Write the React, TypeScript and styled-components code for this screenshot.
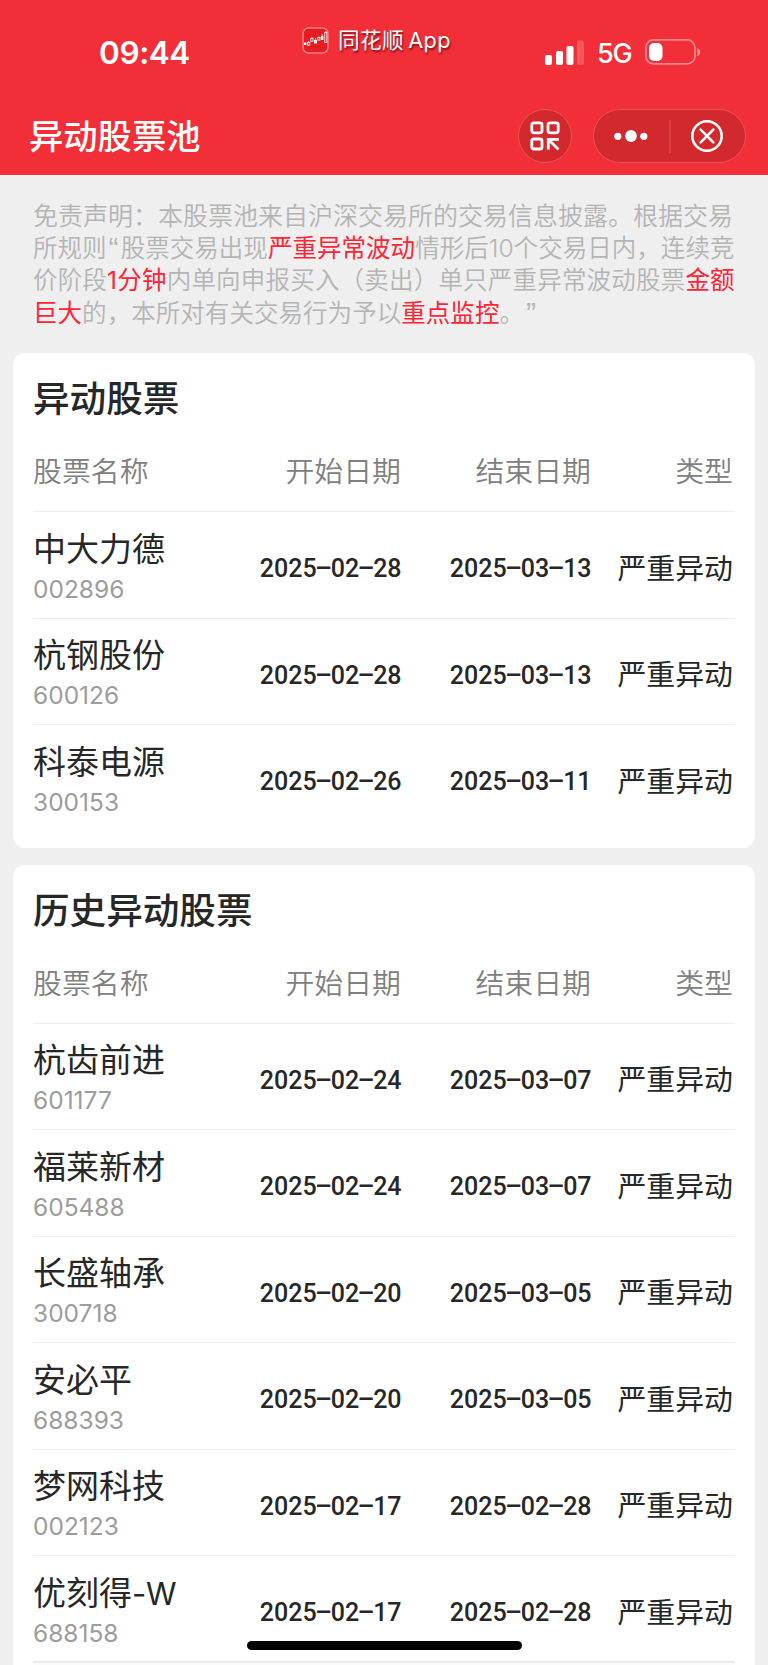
import React from "react";
import styled, { createGlobalStyle } from "styled-components";

const GlobalStyle = createGlobalStyle`
  *, *::before, *::after { box-sizing: border-box; }
  html, body { margin: 0; padding: 0; background: #efefef; }
  body {
    font-family: Inter, "Noto Sans CJK SC", sans-serif;
    color: #272727;
    overflow: hidden;
  }
`;

const Screen = styled.main`
  width: 768px;
  height: 1665px;
  overflow: hidden;
  display: flex;
  flex-direction: column;
  background: #efefef;
`;

const Header = styled.header`
  height: 175px;
  flex: none;
  background: #f22f38;
  color: #fff;
  display: flex;
  flex-direction: column;
`;

const StatusBar = styled.div`
  height: 97px;
  display: grid;
  grid-template-columns: 302px 243px 1fr;
`;

const Clock = styled.time`
  padding: 32px 0 0 99px;
  font-size: 31.5px;
  line-height: 42px;
  font-weight: 600;
  letter-spacing: -0.4px;
`;

const Brand = styled.div`
  height: 27px;
  margin-top: 27px;
  display: flex;
  align-items: center;
  gap: 9px;
`;

const BrandName = styled.span`
  font-size: 21.6px;
  line-height: 27px;
  white-space: nowrap;
  letter-spacing: 0.45px;
  text-shadow: 1px 2px 2px rgba(70, 0, 0, 0.65);
`;

const Latin = styled.span`
  margin-left: 4px;
`;

const Signals = styled.div`
  height: 26px;
  margin-top: 39px;
  display: flex;
  align-items: center;
`;

const Network = styled.span`
  width: 35px;
  margin: 3px 13px 0 13px;
  font-size: 27px;
  font-weight: 450;
  line-height: 26px;
  letter-spacing: -1.2px;
  white-space: nowrap;
`;

const NavBar = styled.div`
  height: 78px;
  padding: 0 22px 0 29px;
  display: flex;
  align-items: center;
`;

const PageTitle = styled.h1`
  margin: 0 auto 0 0;
  padding-top: 1px;
  font-size: 34.3px;
  line-height: 50px;
  font-weight: 500;
`;

const RoundButton = styled.button`
  width: 54px;
  height: 54px;
  margin: 0 21px 0 0;
  padding: 0;
  border: 1px solid #ea5359;
  border-radius: 50%;
  background: #d2292f;
  display: grid;
  place-items: center;
`;

const Capsule = styled.div`
  width: 153px;
  height: 54px;
  border: 1px solid #ea5359;
  border-radius: 27px;
  background: #d2292f;
  display: grid;
  grid-template-columns: 74.5px 2px 74.5px;
  align-items: center;
`;

const CapsuleButton = styled.button`
  padding: 0;
  border: 0;
  background: none;
  height: 52px;
  display: grid;
  place-items: center;
`;

const CapsuleRule = styled.span`
  width: 2px;
  height: 33px;
  background: #de3c43;
`;

const Disclaimer = styled.p`
  margin: 0;
  padding: 25px 0 0 33px;
  height: 178px;
  flex: none;
  color: #b4b4b4;
  font-weight: 350;
  line-height: 32.2px;
  text-spacing-trim: space-all;
`;

const Line = styled.span<{ $size: number; $track?: number }>`
  display: block;
  height: 32.2px;
  white-space: nowrap;
  font-size: ${(p) => p.$size}px;
  letter-spacing: ${(p) => p.$track ?? 0}px;
`;

const Quote = styled.span`
  display: inline-block;
  width: 14px;
  height: 32px;
  font-family: "Liberation Sans", sans-serif;
  font-size: 30px;
  line-height: 32px;
  vertical-align: top;
  text-align: center;
`;

const Alert = styled.em`
  font-style: normal;
  font-weight: 400;
  color: #ff2436;
`;

const Card = styled.section`
  flex: none;
  margin: 0 13px 16.9px;
  padding: 0 20px 16.3px;
  background: #fff;
  border-radius: 12px;
`;

const CardTitle = styled.h2`
  margin: 0;
  padding-top: 21px;
  height: 79px;
  font-size: 36.6px;
  line-height: 50px;
  font-weight: 500;
`;

const columns = `
  display: grid;
  grid-template-columns: 180px 188px 190px 142px;
  align-items: center;
`;

const HeadRow = styled.div`
  ${columns}
  height: 80px;
  color: #808080;
  font-size: 28.9px;
  font-weight: 350;
  line-height: 40px;
  border-bottom: 1px solid #ececec;
`;

const HeadCell = styled.span<{ $right?: boolean }>`
  margin-top: 1px;
  text-align: ${(p) => (p.$right ? "right" : "left")};
`;

const Row = styled.div`
  ${columns}
  height: 106.5px;
  border-bottom: 1px solid #ececec;
  &:last-child { border-bottom-color: transparent; }
`;

const Stock = styled.div`
  display: flex;
  flex-direction: column;
  padding-top: 4px;
`;

const StockName = styled.span`
  height: 44px;
  font-size: 33px;
  line-height: 44px;
  font-weight: 380;
  white-space: nowrap;
`;

const NameSuffix = styled.span`
  font-size: 31px;
  letter-spacing: -0.2px;
`;

const StockCode = styled.span`
  font-size: 24.5px;
  line-height: 36px;
  color: #9c9c9c;
`;

const DateCell = styled.time`
  justify-self: end;
  margin-right: -1px;
  padding-top: 7px;
  font-family: Roboto, sans-serif;
  font-size: 26.4px;
  line-height: 36px;
  font-weight: 500;
  white-space: nowrap;
  transform: scaleX(0.948);
  transform-origin: right;
`;

const Dash = styled.span`
  display: inline-block;
  width: 14.8px;
  text-align: center;
  transform: translateY(-1px) scaleX(2.05);
`;

const Kind = styled.span`
  padding-top: 8px;
  font-size: 28.9px;
  line-height: 40px;
  font-weight: 380;
  text-align: right;
  white-space: nowrap;
`;

const HomeIndicator = styled.div`
  position: absolute;
  left: 247px;
  top: 1641px;
  width: 274.5px;
  height: 9px;
  border-radius: 5px;
  background: #000;
`;

const BottomEdge = styled.div`
  position: absolute;
  left: 33px;
  top: 1661px;
  width: 702px;
  height: 2px;
  background: #ececec;
  box-shadow: 0 1px 5px #eeeeee;
`;

type Entry = { name: string; suffix?: string; code: string; start: string; end: string };

const current: Entry[] = [
  { name: "中大力德", code: "002896", start: "2025-02-28", end: "2025-03-13" },
  { name: "杭钢股份", code: "600126", start: "2025-02-28", end: "2025-03-13" },
  { name: "科泰电源", code: "300153", start: "2025-02-26", end: "2025-03-11" },
];

const history: Entry[] = [
  { name: "杭齿前进", code: "601177", start: "2025-02-24", end: "2025-03-07" },
  { name: "福莱新材", code: "605488", start: "2025-02-24", end: "2025-03-07" },
  { name: "长盛轴承", code: "300718", start: "2025-02-20", end: "2025-03-05" },
  { name: "安必平", code: "688393", start: "2025-02-20", end: "2025-03-05" },
  { name: "梦网科技", code: "002123", start: "2025-02-17", end: "2025-02-28" },
  { name: "优刻得", suffix: "-W", code: "688158", start: "2025-02-17", end: "2025-02-28" },
];

function DateText({ value }: { value: string }) {
  return (
    <DateCell>
      {value.split("-").map((part, i) => (
        <React.Fragment key={i}>
          {i > 0 && <Dash>-</Dash>}
          {part}
        </React.Fragment>
      ))}
    </DateCell>
  );
}

function StockTable({ title, rows }: { title: string; rows: Entry[] }) {
  return (
    <Card>
      <CardTitle>{title}</CardTitle>
      <HeadRow>
        <HeadCell>股票名称</HeadCell>
        <HeadCell $right>开始日期</HeadCell>
        <HeadCell $right>结束日期</HeadCell>
        <HeadCell $right>类型</HeadCell>
      </HeadRow>
      {rows.map((r) => (
        <Row key={r.code}>
          <Stock>
            <StockName>{r.name}{r.suffix && <NameSuffix>{r.suffix}</NameSuffix>}</StockName>
            <StockCode>{r.code}</StockCode>
          </Stock>
          <DateText value={r.start} />
          <DateText value={r.end} />
          <Kind>严重异动</Kind>
        </Row>
      ))}
    </Card>
  );
}

const BrandIcon = () => (
  <svg width="27" height="27" viewBox="0 0 27 27" fill="none">
    <rect x="1" y="1" width="25" height="25" rx="5.5" fill="#e51d22" stroke="#f78086" strokeWidth="1.5" />
    <rect x="2" y="15.5" width="2.4" height="2.5" fill="#fff" />
    <rect x="12" y="13" width="3" height="3.5" fill="#fff" />
    <rect x="19" y="9" width="2.4" height="4" fill="#fff" />
    <g stroke="#fff" strokeWidth="0.8">
      <rect x="5.6" y="15.5" width="2.2" height="2.6" />
      <rect x="8.8" y="11.5" width="2.2" height="3" />
      <rect x="15.8" y="10.5" width="2.2" height="2.6" />
      <rect x="22.8" y="5.5" width="2" height="10" />
      <path d="M6.7 14v1.5M6.7 18v1M9.9 10v1.5M13.5 11v2M16.9 9.5v1M20.2 7v2M23.8 4v1.5" />
    </g>
  </svg>
);

const SignalIcon = () => (
  <svg width="39" height="25" viewBox="0 0 39 25" fill="#fff">
    <rect x="0" y="15" width="7" height="10" rx="2" />
    <rect x="11" y="11" width="7" height="14" rx="2" />
    <rect x="21.5" y="6" width="7" height="19" rx="2" />
    <rect x="32" y="0.5" width="7" height="24.5" rx="2" opacity="0.2" />
  </svg>
);

const BatteryIcon = () => (
  <svg width="56" height="26" viewBox="0 0 56 26" fill="none">
    <rect x="0.9" y="0.9" width="49" height="24" rx="7.5" stroke="#fff" strokeOpacity="0.43" strokeWidth="1.7" />
    <rect x="4" y="4" width="13.5" height="18" rx="5" fill="#fff" />
    <path d="M52.3 9c4 1.3 4 6.9 0 8.2z" fill="#fff" opacity="0.45" />
  </svg>
);

const ScanIcon = () => (
  <svg width="30" height="30" viewBox="0 0 30 30" fill="none" stroke="#fff" strokeWidth="2.8">
    <rect x="1.8" y="1.8" width="10.2" height="10" rx="2" />
    <rect x="18" y="1.8" width="10.2" height="10" rx="2" />
    <rect x="1.8" y="18" width="10.2" height="10" rx="2" />
    <path d="M29 18.3H18.3V28.5M18.5 18.5L28.5 28.5" />
  </svg>
);

const MoreIcon = () => (
  <svg width="34" height="14" viewBox="0 0 34 14" fill="#fff">
    <circle cx="3.8" cy="7.3" r="3.6" />
    <circle cx="17" cy="7" r="5.9" />
    <circle cx="29.8" cy="7.3" r="3.6" />
  </svg>
);

const CloseIcon = () => (
  <svg width="34" height="32" viewBox="1 0 34 32" fill="none" stroke="#fff" strokeWidth="2.6">
    <circle cx="17" cy="16" r="14.7" />
    <path d="M10.7 9.7L23.3 22.3M23.3 9.7L10.7 22.3" strokeLinecap="round" />
  </svg>
);

export default function App() {
  return (
    <Screen>
      <GlobalStyle />
      <Header>
        <StatusBar>
          <Clock>09:44</Clock>
          <Brand>
            <BrandIcon />
            <BrandName>同花顺<Latin>App</Latin></BrandName>
          </Brand>
          <Signals>
            <SignalIcon />
            <Network>5G</Network>
            <BatteryIcon />
          </Signals>
        </StatusBar>
        <NavBar>
          <PageTitle>异动股票池</PageTitle>
          <RoundButton aria-label="扫码"><ScanIcon /></RoundButton>
          <Capsule>
            <CapsuleButton aria-label="更多"><MoreIcon /></CapsuleButton>
            <CapsuleRule />
            <CapsuleButton aria-label="关闭"><CloseIcon /></CapsuleButton>
          </Capsule>
        </NavBar>
      </Header>
      <Disclaimer>
        <Line $size={25}>免责声明：本股票池来自沪深交易所的交易信息披露。根据交易</Line>
        <Line $size={24.5} $track={0.04}>所规则<Quote>“</Quote>股票交易出现<Alert>严重异常波动</Alert>情形后10个交易日内，连续竞</Line>
        <Line $size={24.5} $track={0.2}>价阶段<Alert>1分钟</Alert>内单向申报买入（卖出）单只严重异常波动股票<Alert>金额</Alert></Line>
        <Line $size={24.5} $track={0.05}><Alert>巨大</Alert>的，本所对有关交易行为予以<Alert>重点监控</Alert>。<Quote>”</Quote></Line>
      </Disclaimer>
      <StockTable title="异动股票" rows={current} />
      <StockTable title="历史异动股票" rows={history} />
      <BottomEdge />
      <HomeIndicator />
    </Screen>
  );
}
